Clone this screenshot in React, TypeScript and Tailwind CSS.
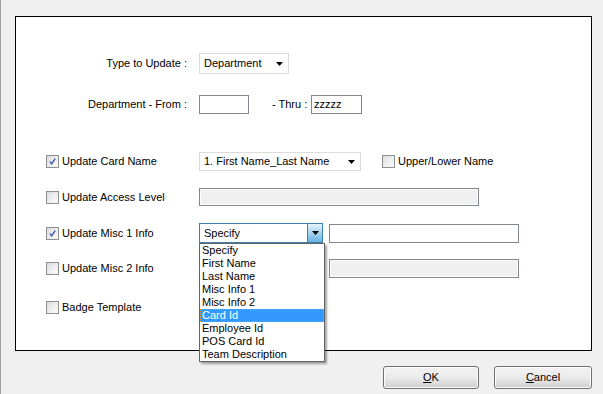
import React from 'react'

const font = { fontFamily: '"Liberation Sans", Arial, sans-serif' }

const Check = ({ checked }: { checked?: boolean }) => (
  <div className="w-[13px] h-[13px] border border-[#8e8f8f] bg-gradient-to-br from-[#dcdcdc] to-[#fbfbfb] p-[2px] shrink-0">
    <div className="w-full h-full bg-gradient-to-br from-[#e4e4e4] to-[#f8f8f8] flex items-center justify-center">
      {checked && (
        <svg width="9" height="9" viewBox="0 0 9 9">
          <path d="M1 4.5 L3.5 7.5 L8 0.8" fill="none" stroke="#3d5ba6" strokeWidth="1.8" />
        </svg>
      )}
    </div>
  </div>
)

const Arrow = () => (
  <svg width="7" height="4" viewBox="0 0 7 4">
    <path d="M0 0 H7 L3.5 4 Z" fill="#000" />
  </svg>
)

const items = ['Specify', 'First Name', 'Last Name', 'Misc Info 1', 'Misc Info 2', 'Card Id', 'Employee Id', 'POS Card Id', 'Team Description']

const App = () => {
  return (
    <div className="w-[603px] h-[394px] bg-[#f0f0f0] border-l border-[#a0a0a0] text-[11px] text-black overflow-hidden" style={font}>
      <div className="ml-[14px] mt-[16px] w-[577px] h-[335px] border border-black bg-white flex flex-col pt-[36px]">
        {/* type to update */}
        <div className="flex items-center h-[21px]">
          <div className="w-[171px] text-right">Type to Update :</div>
          <div className="ml-[12px] w-[90px] h-[21px] border border-[#dcdcdc] flex items-center justify-between pl-[4px] pr-[5px]">
            <span>Department</span>
            <Arrow />
          </div>
        </div>

        {/* department range */}
        <div className="flex items-center h-[19px] mt-[21px]">
          <div className="w-[171px] text-right">Department - From :</div>
          <div className="ml-[12px] w-[50px] h-[19px] border border-[#828790]" />
          <div className="ml-[23px] w-[39px]">- Thru :</div>
          <div className="w-[51px] h-[19px] border border-[#828790] pl-[2px] leading-[17px]">zzzzz</div>
        </div>

        {/* card name */}
        <div className="flex items-center h-[19px] mt-[38px] pl-[30px]">
          <div className="w-[153px] flex items-center gap-[3px]">
            <Check checked />
            <span>Update Card Name</span>
          </div>
          <div className="w-[162px] h-[19px] border border-[#dcdcdc] flex items-center justify-between pl-[4px] pr-[5px]">
            <span>1. First Name_Last Name</span>
            <Arrow />
          </div>
          <div className="ml-[21px] flex items-center gap-[3px]">
            <Check />
            <span>Upper/Lower Name</span>
          </div>
        </div>

        {/* access level */}
        <div className="flex items-center h-[18px] mt-[17px] pl-[30px]">
          <div className="w-[153px] flex items-center gap-[3px]">
            <Check />
            <span>Update Access Level</span>
          </div>
          <div className="w-[280px] h-[18px] border border-[#828790] bg-[#f0f0f0] shadow-[inset_0_0_0_1px_#fff]" />
        </div>

        {/* misc 1 */}
        <div className="flex items-center h-[20px] mt-[17px] pl-[30px]">
          <div className="w-[153px] flex items-center gap-[3px]">
            <Check checked />
            <span>Update Misc 1 Info</span>
          </div>
          <div className="relative w-[124px] h-[20px] border border-[#3c7fb1] flex items-center">
            <span className="flex-1 pl-[4px]">Specify</span>
            <div className="w-[15px] h-full border-l border-[#3c7fb1] bg-gradient-to-b from-[#e5f4fc] to-[#67b3e0] flex items-center justify-center">
              <Arrow />
            </div>
            <div className="absolute left-[-1px] top-[19px] w-[126px] bg-white border border-[#646464] shadow-[2px_2px_2px_rgba(0,0,0,0.35)] z-10">
              {items.map((t) =>
                t === 'Card Id' ? (
                  <div key={t} className="h-[13px] leading-[11px] bg-[#3399ff] text-white border border-dotted border-[#ff8c00] pl-[1px]">
                    {t}
                  </div>
                ) : (
                  <div key={t} className="h-[13px] leading-[13px] pl-[2px]">
                    {t}
                  </div>
                )
              )}
            </div>
          </div>
          <div className="ml-[6px] w-[190px] h-[19px] border border-[#828790]" />
        </div>

        {/* misc 2 */}
        <div className="flex items-center h-[19px] mt-[16px] pl-[30px]">
          <div className="w-[153px] flex items-center gap-[3px]">
            <Check />
            <span>Update Misc 2 Info</span>
          </div>
          <div className="ml-[130px] w-[190px] h-[19px] border border-[#828790] bg-[#f0f0f0] shadow-[inset_0_0_0_1px_#fff]" />
        </div>

        {/* badge */}
        <div className="flex items-center h-[19px] mt-[20px] pl-[30px]">
          <div className="flex items-center gap-[3px]">
            <Check />
            <span>Badge Template</span>
          </div>
        </div>
      </div>

      <div className="flex justify-end gap-[15px] mt-[15px] pr-[11px]">
        <button className="w-[96px] h-[23px] rounded-[3px] border border-[#707070] bg-gradient-to-b from-[#f2f2f2] via-[#ebebeb] to-[#cfcfcf] shadow-[inset_0_0_0_1px_#fcfcfc]">
          <span className="underline">O</span>K
        </button>
        <button className="w-[98px] h-[23px] rounded-[3px] border border-[#707070] bg-gradient-to-b from-[#f2f2f2] via-[#ebebeb] to-[#cfcfcf] shadow-[inset_0_0_0_1px_#fcfcfc]">
          <span className="underline">C</span>ancel
        </button>
      </div>
    </div>
  )
}

export default App
